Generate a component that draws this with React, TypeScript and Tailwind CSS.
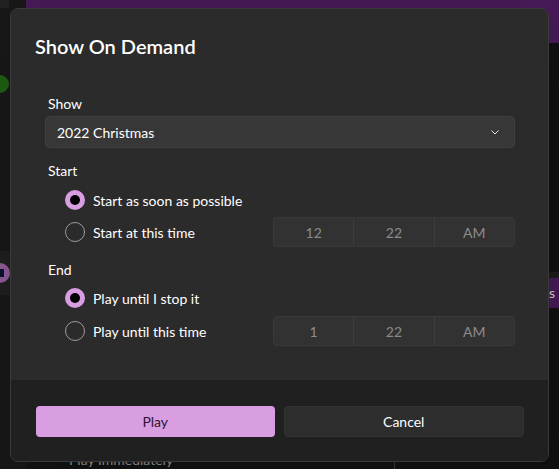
import React, { useState } from 'react';

const font = { fontFamily: 'Lato, "Noto Sans", sans-serif' };

type RadioProps = {
  checked: boolean;
  label: string;
  onSelect: () => void;
};

const Radio: React.FC<RadioProps> = ({ checked, label, onSelect }) => (
  <button type="button" onClick={onSelect} className="flex items-center h-8 gap-[8px] text-left">
    {checked ? (
      <span className="w-5 h-5 rounded-full bg-[#d99de1] flex items-center justify-center">
        <span className="w-[10px] h-[10px] rounded-full bg-black" />
      </span>
    ) : (
      <span className="w-5 h-5 rounded-full border border-[#9b9b9b]" />
    )}
    <span className="text-[14px] text-white">{label}</span>
  </button>
);

const TimePicker: React.FC<{ hour: string; minute: string; period: string }> = ({ hour, minute, period }) => (
  <div className="flex w-[242px] h-[30px] rounded-[4px] border border-[#393939] bg-[#323232] text-[14px] text-[#8b8b8b]">
    <div className="flex-1 flex items-center justify-center">{hour}</div>
    <div className="flex-1 flex items-center justify-center border-l border-[#3d3d3d]">{minute}</div>
    <div className="flex-1 flex items-center justify-center border-l border-[#3d3d3d]">{period}</div>
  </div>
);

const App: React.FC = () => {
  const [start, setStart] = useState<'asap' | 'time'>('asap');
  const [end, setEnd] = useState<'stop' | 'time'>('stop');

  return (
    <div className="relative w-[559px] h-[469px] overflow-hidden bg-[#101010]" style={font}>
      {/* app behind the dialog */}
      <div className="flex h-full">
        <div className="w-[26px] bg-[#181818] flex flex-col">
          <div className="w-[9px] h-[8px] bg-[#222]" />
          <div className="mt-[67px] -ml-[9px] w-[18px] h-[18px] rounded-full bg-[#1d5e12]" />
          <div className="mt-[158px] h-[44px] bg-[#1f1f1f] flex items-center">
            <div className="-ml-[10px] w-[20px] h-[20px] rounded-full bg-[#8e5d96] flex items-center justify-center">
              <div className="w-[8px] h-[8px] bg-[#0a1530]" />
            </div>
          </div>
        </div>
        <div className="flex-1 flex flex-col">
          <div className="h-[43px] bg-[#451a56]" />
          <div className="flex-1 flex">
            <div className="w-[368px] bg-[#141414] flex flex-col justify-end pb-[2px]">
              <div className="pl-[43px] text-[14px] text-[#9a9a9a] leading-[14px]">Play Immediately</div>
            </div>
            <div className="w-[1px] bg-[#3a3a3a] h-full" />
            <div className="flex-1 bg-[#111111] flex flex-col pt-[229px]">
              <div className="h-[36px] bg-[#1c1c1c] flex justify-end">
                <div className="mt-[6px] w-[10px] h-[30px] bg-[#451a56] text-[14px] text-[#cfcfcf] leading-[30px]">s</div>
              </div>
            </div>
          </div>
        </div>
      </div>

      {/* dialog */}
      <div className="absolute left-[10px] top-[8px] w-[539px] h-[454px] rounded-[8px] border border-[#3a3a3a] overflow-hidden flex flex-col shadow-2xl">
        <div className="flex-1 bg-[#2b2b2b] pt-[23px] px-[24px]">
          <h1 className="text-[20px] leading-[28px] font-semibold text-white">Show On Demand</h1>
          <div className="mt-[34px] ml-[10px] mr-[9px]">
            <div className="pl-[3px] text-[14px] leading-[20px] text-white mb-[2px]">Show</div>
            <button
              type="button"
              className="w-full h-[32px] rounded-[4px] bg-[#373737] border border-[#3f3f3f] flex items-center justify-between pl-[11px] pr-[15px] text-[14px] text-white"
            >
              <span>2022 Christmas</span>
              <svg width="8" height="5" viewBox="0 0 8 5" fill="none">
                <path d="M0.5 0.5 L4 4 L7.5 0.5" stroke="#e8e8e8" strokeWidth="1" />
              </svg>
            </button>

            <div className="mt-[13px] pl-[3px] text-[14px] leading-[20px] text-white">Start</div>
            <div className="mt-[3px] pl-[20px] flex flex-col">
              <Radio checked={start === 'asap'} label="Start as soon as possible" onSelect={() => setStart('asap')} />
              <div className="flex items-center justify-between">
                <Radio checked={start === 'time'} label="Start at this time" onSelect={() => setStart('time')} />
                <TimePicker hour="12" minute="22" period="AM" />
              </div>
            </div>

            <div className="mt-[12px] pl-[3px] text-[14px] leading-[20px] text-white">End</div>
            <div className="mt-[2px] pl-[20px] flex flex-col">
              <Radio checked={end === 'stop'} label="Play until I stop it" onSelect={() => setEnd('stop')} />
              <div className="flex items-center justify-between mt-[1px]">
                <Radio checked={end === 'time'} label="Play until this time" onSelect={() => setEnd('time')} />
                <TimePicker hour="1" minute="22" period="AM" />
              </div>
            </div>
          </div>
        </div>
        <div className="h-[81px] bg-[#202020] pl-[25px] pr-[24px] pt-[26px] flex gap-[9px]">
          <button type="button" className="flex-1 h-[31px] rounded-[4px] bg-[#d99de1] text-[14px] text-[#2e1233]">
            Play
          </button>
          <button type="button" className="flex-1 h-[31px] rounded-[4px] bg-[#2d2d2d] border border-[#323232] text-[14px] text-white">
            Cancel
          </button>
        </div>
      </div>
    </div>
  );
};

export default App;
